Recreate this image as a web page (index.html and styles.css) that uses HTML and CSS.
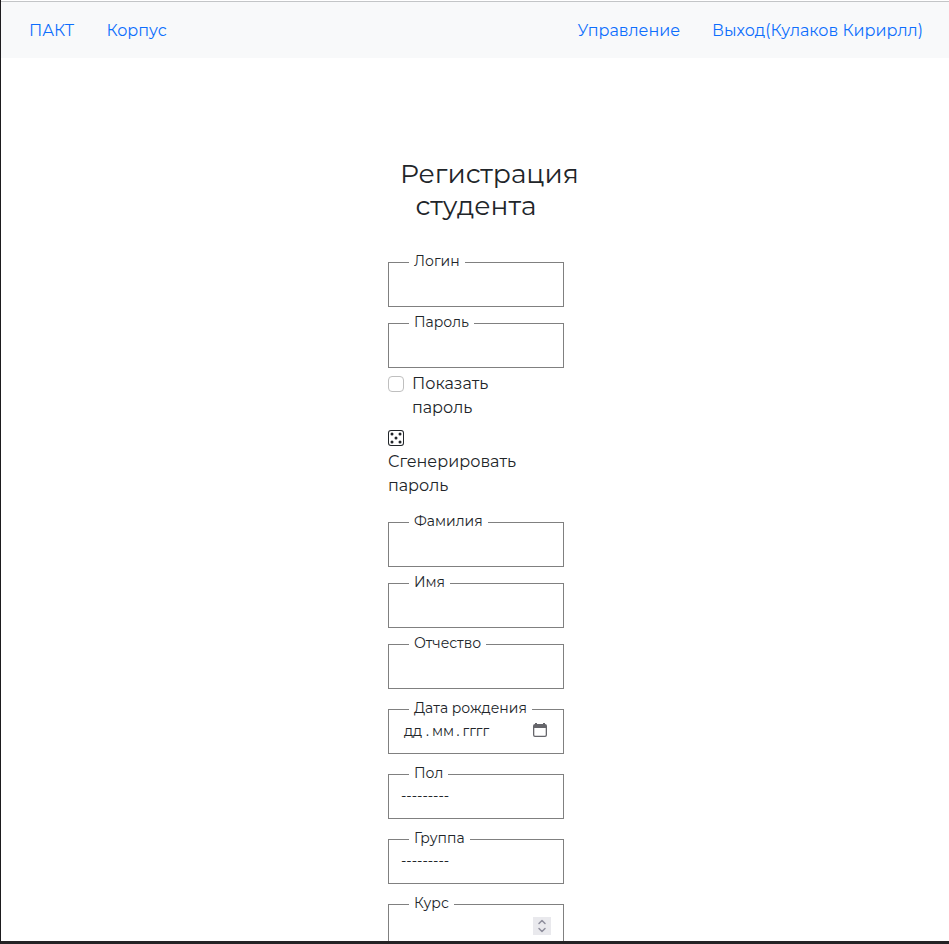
FILE: index.html
```html
<!DOCTYPE html>
<html lang="ru">
<head>
<meta charset="utf-8">
<title>Регистрация студента</title>
<link rel="stylesheet" href="styles.css">
</head>
<body>
<div class="window">
  <nav class="navbar">
    <a class="brand">ПАКТ</a>
    <a class="corpus">Корпус</a>
    <a class="manage">Управление</a>
    <a class="logout">Выход(Кулаков Кирирлл)</a>
  </nav>
  <main class="form">
    <h1><span class="title-top">Регистрация</span><span class="title-bottom">студента</span></h1>
    <div class="field"><label class="login">Логин</label></div>
    <div class="field"><label class="password">Пароль</label></div>
    <div class="check"><span class="box"></span><span class="check-text">Показать<br>пароль</span></div>
    <div class="generate">
      <svg width="16" height="16" viewBox="0 0 16 16" fill="#212529"><path d="M13 1a2 2 0 0 1 2 2v10a2 2 0 0 1-2 2H3a2 2 0 0 1-2-2V3a2 2 0 0 1 2-2zM3 0a3 3 0 0 0-3 3v10a3 3 0 0 0 3 3h10a3 3 0 0 0 3-3V3a3 3 0 0 0-3-3z"/><circle cx="4" cy="4" r="1.5"/><circle cx="12" cy="4" r="1.5"/><circle cx="4" cy="12" r="1.5"/><circle cx="12" cy="12" r="1.5"/><circle cx="8" cy="8" r="1.5"/></svg>
      <div>Сгенерировать<br>пароль</div>
    </div>
    <div class="field"><label class="surname">Фамилия</label></div>
    <div class="field"><label class="name">Имя</label></div>
    <div class="field"><label class="patronymic">Отчество</label></div>
    <div class="field spaced"><label class="birth">Дата рождения</label>
      <div class="date"><span class="dd">дд</span><span class="dot">.</span><span class="mm">мм</span><span class="dot">.</span><span class="yyyy">гггг</span>
        <svg class="calendar" width="14" height="14" viewBox="0 0 14 14"><path fill="#66666b" fill-rule="evenodd" d="M2 1V0h2v1h6V0h2v1a2 2 0 0 1 2 2v9a2 2 0 0 1-2 2H2a2 2 0 0 1-2-2V3a2 2 0 0 1 2-2zM1.3 5v7c0 .4.3.7.7.7h10c.4 0 .7-.3.7-.7V5z"/></svg>
      </div>
    </div>
    <div class="field spaced"><label class="sex">Пол</label><div class="select">---------</div></div>
    <div class="field spaced"><label class="group">Группа</label><div class="select">---------</div></div>
    <div class="field spaced"><label class="course">Курс</label>
      <div class="spinner"><svg width="18" height="18" viewBox="0 0 18 18" fill="none" stroke="#8f8f9d" stroke-width="1.5" stroke-linecap="round" stroke-linejoin="round"><path d="M6 6.5l3-3 3 3M6 11.5l3 3 3-3"/></svg></div>
    </div>
  </main>
</div>
</body>
</html>
```
FILE: styles.css
```css
* { box-sizing: border-box; }
html, body { height: 944px; overflow: hidden; }
body {
  margin: 0;
  color: #212529;
  font: 16px/24px Montserrat, Inter, sans-serif;
}
.window {
  height: 944px;
  overflow: hidden;
  border-left: 1px solid #1d1b1e;
  border-bottom: 3px solid #242325;
}
.navbar {
  display: flex;
  height: 58px;
  margin-bottom: 100px;
  padding: 18px 26px 0 28px;
  border-top: 1px solid #fff;
  background: linear-gradient(#c3c5c7 1px, #f8f9fa 1px);
  color: #0d6efd;
  white-space: nowrap;
}
.brand { width: 45px; margin-right: 32.4px; }
.corpus { width: 61px; }
.manage { width: 103px; margin: 0 31.6px 0 auto; }
.logout { width: 211px; }
.form { width: 176px; margin-left: 387px; }
h1 {
  height: 88px;
  margin: 0 0 16px;
  font-size: 26.5px;
  font-weight: 400;
  line-height: 32px;
}
h1 span { display: block; white-space: nowrap; }
.title-top { width: 178px; margin-left: 12px; }
.title-bottom { margin-left: 27.6px; }
.field {
  height: 45px;
  margin-bottom: 16px;
  border: 1px solid #808080;
}
.field.spaced { margin-top: 20px; }
.field label {
  display: block;
  height: 20px;
  margin: -12px 0 0 20px;
  padding-left: 5px;
  background: #fff;
  font-size: 14px;
  line-height: 20px;
  white-space: nowrap;
}
.login { width: 56px; }
.password { width: 65px; }
.surname { width: 79px; }
.name { width: 41px; }
.patronymic { width: 77px; }
.birth { width: 123px; }
.sex { width: 39px; }
.group { width: 61px; }
.course { width: 45px; }
.check { display: flex; gap: 8px; height: 48px; margin: -12px 0 10px; }
.box {
  width: 16px;
  height: 16px;
  margin-top: 4px;
  border: 1px solid #bfbfbf;
  border-radius: 4px;
}
.generate { height: 92px; white-space: nowrap; }
.generate svg { display: block; margin: 0 0 4px; }
.date {
  display: flex;
  height: 20px;
  margin: 3px 0 0 15px;
  font-size: 14px;
  line-height: 20px;
}
.dd { width: 22px; }
.dot { width: 6px; }
.mm { width: 24.5px; }
.dot + .yyyy { width: 28px; }
.calendar { margin: 2px 16px 0 auto; }
.select { margin: 3px 0 0 12px; font-size: 14px; line-height: 20px; }
.spinner { width: 18px; height: 18px; margin: 4px 0 0 144px; background: #e9e9ed; }
.spinner svg { display: block; }
```
